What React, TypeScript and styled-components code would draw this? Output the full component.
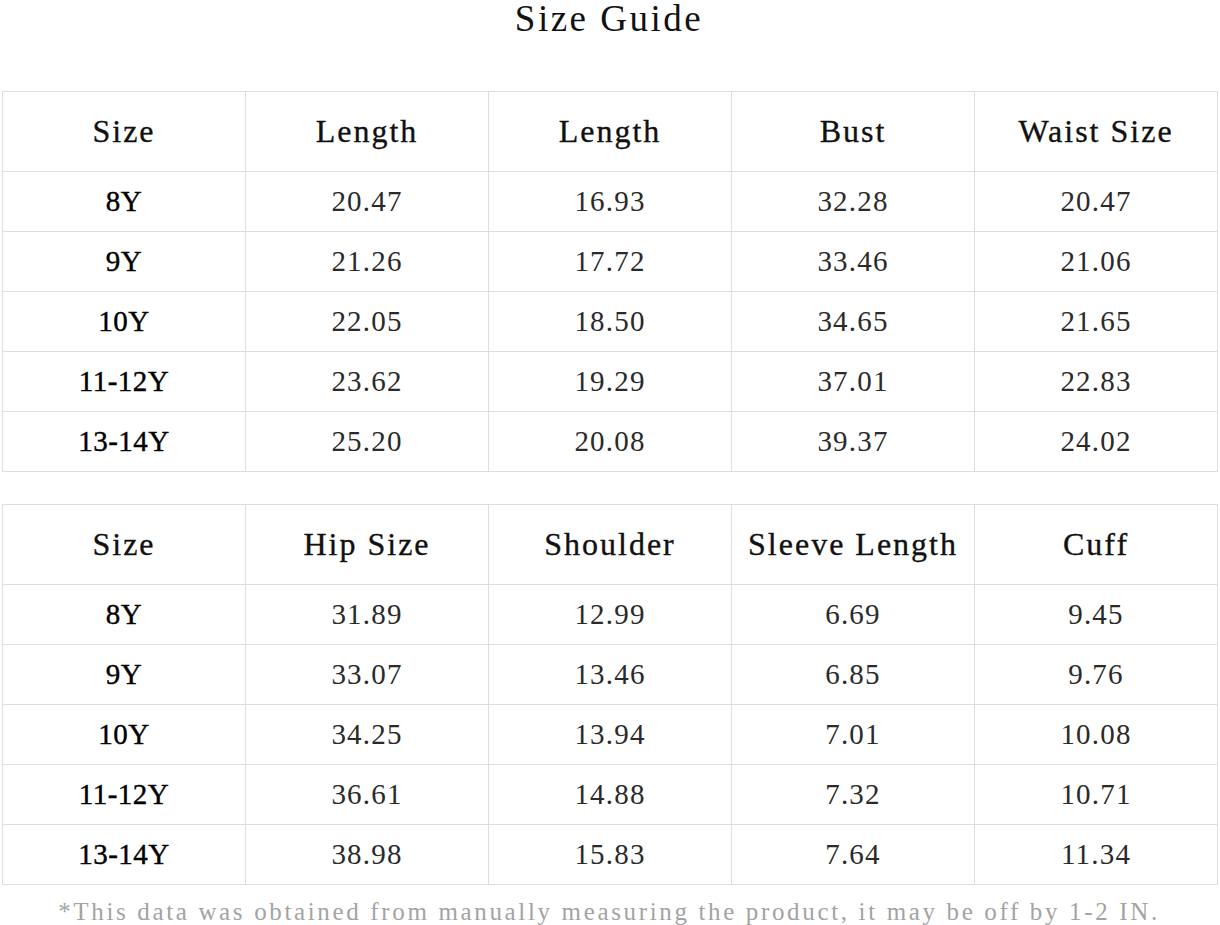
import React from "react";
import styled, { createGlobalStyle } from "styled-components";

const Global = createGlobalStyle`
  html, body { margin: 0; padding: 0; background: #fff; }
  body { font-family: "Liberation Serif", "Noto Sans CJK SC", serif; color: #111; }
`;

const Page = styled.div`
  width: 1220px;
  padding: 0 0 0 2px;
  box-sizing: border-box;
  display: flex;
  flex-direction: column;
`;

const Title = styled.h1`
  margin: 0;
  height: 91px;
  font-weight: normal;
  font-size: 37px;
  line-height: 38px;
  letter-spacing: 2.5px;
  text-align: center;
  padding-right: 4px;
  color: #111;
`;

const Table = styled.table<{ $gap: number }>`
  border-collapse: collapse;
  table-layout: fixed;
  width: 1216px;
  margin-bottom: ${(p) => p.$gap}px;
`;

const HeadCell = styled.th`
  height: 79px;
  border: 1px solid #dedede;
  font-weight: normal;
  font-size: 32px;
  letter-spacing: 2px;
  color: #111;
  -webkit-text-stroke: 0.35px #111;
  text-align: center;
  vertical-align: middle;
  padding: 0;
  white-space: nowrap;
`;

const Cell = styled.td<{ $label?: boolean }>`
  height: 59px;
  border: 1px solid #dedede;
  font-size: 29px;
  letter-spacing: ${(p) => (p.$label ? "0.5px" : "1.2px")};
  color: ${(p) => (p.$label ? "#000" : "#2a2a2a")};
  -webkit-text-stroke: ${(p) => (p.$label ? "0.4px #000" : "0")};
  text-align: center;
  vertical-align: middle;
  padding: 0;
`;

const Note = styled.p`
  margin: 0;
  padding-top: 14px;
  font-size: 25px;
  line-height: 26px;
  letter-spacing: 2.65px;
  color: #a3a3a3;
  text-align: center;
  padding-right: 4px;
  white-space: nowrap;
`;

const sizes = ["8Y", "9Y", "10Y", "11-12Y", "13-14Y"];

const table1 = {
  head: ["Size", "Length", "Length", "Bust", "Waist Size"],
  rows: [
    ["20.47", "16.93", "32.28", "20.47"],
    ["21.26", "17.72", "33.46", "21.06"],
    ["22.05", "18.50", "34.65", "21.65"],
    ["23.62", "19.29", "37.01", "22.83"],
    ["25.20", "20.08", "39.37", "24.02"],
  ],
};

const table2 = {
  head: ["Size", "Hip Size", "Shoulder", "Sleeve Length", "Cuff"],
  rows: [
    ["31.89", "12.99", "6.69", "9.45"],
    ["33.07", "13.46", "6.85", "9.76"],
    ["34.25", "13.94", "7.01", "10.08"],
    ["36.61", "14.88", "7.32", "10.71"],
    ["38.98", "15.83", "7.64", "11.34"],
  ],
};

function SizeTable({ data, gap }: { data: { head: string[]; rows: string[][] }; gap: number }) {
  return (
    <Table $gap={gap}>
      <thead>
        <tr>
          {data.head.map((h, i) => (
            <HeadCell key={i}>{h}</HeadCell>
          ))}
        </tr>
      </thead>
      <tbody>
        {data.rows.map((r, i) => (
          <tr key={i}>
            <Cell $label>{sizes[i]}</Cell>
            {r.map((v, j) => (
              <Cell key={j}>{v}</Cell>
            ))}
          </tr>
        ))}
      </tbody>
    </Table>
  );
}

export default function App() {
  return (
    <>
      <Global />
      <Page>
        <Title>Size Guide</Title>
        <SizeTable data={table1} gap={32} />
        <SizeTable data={table2} gap={0} />
        <Note>*This data was obtained from manually measuring the product, it may be off by 1-2 IN.</Note>
      </Page>
    </>
  );
}
